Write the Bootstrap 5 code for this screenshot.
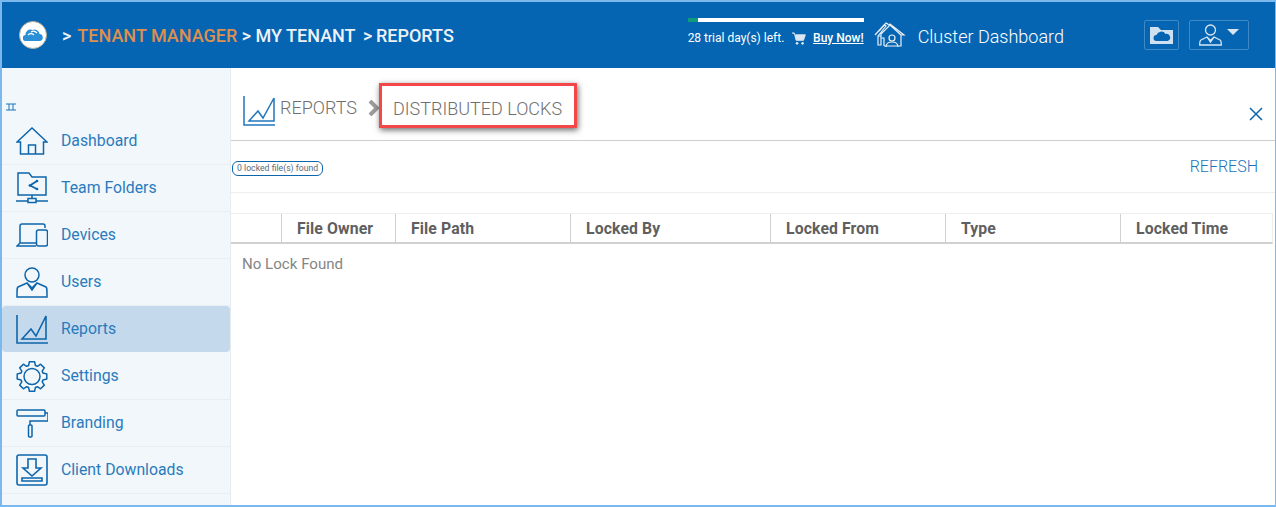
<!DOCTYPE html>
<html lang="en">
<head>
<meta charset="utf-8">
<title>Distributed Locks</title>
<link href="https://cdn.jsdelivr.net/npm/bootstrap@5.3.0/dist/css/bootstrap.min.css" rel="stylesheet">
<style>
html,body{height:507px;overflow:hidden;}
body{font-family:Roboto,"Liberation Sans",sans-serif;background:#fff;}
.frame{width:1276px;height:507px;border-style:solid;border-width:2px 1px 2px 2px;border-color:#7ab8ee;}
.topbar{height:66px;background:#0665b3;color:#fff;padding-left:17px;}
.logo-disc{width:28px;height:28px;border-radius:50%;background:#fff;border:1px solid #b9b29a;}
.crumbs{font-size:18px;font-weight:500;margin-left:15px;white-space:nowrap;color:#edf2f7;}
.crumbs .mgr{color:#dd8f4e;margin-left:6px;}
.crumbs .last{margin-left:-1px;}
.crumbs .third{margin-left:-1px;}
.trial{width:176px;margin-right:10px;margin-bottom:5px;}
.bar-track{height:4px;background:#fff;width:100%;}
.bar-fill{height:4px;background:#0f9b7d;width:6%;}
.trial-line{font-size:12px;white-space:nowrap;margin-top:7px;}
.trial-line a{color:#fff;font-weight:500;margin-left:-1px;}
.cluster{font-size:18px;font-weight:300;margin:3px 80px 0 12px;white-space:nowrap;}
.hdr-btn{height:30px;border:1px solid #3d8ac7;border-radius:2px;}
.b-folder{width:35px;}
.b-user{width:60px;margin-left:10px;margin-right:26px;}
.caret-w{width:0;height:0;border-left:6px solid transparent;border-right:6px solid transparent;border-top:6px solid #d8e6f3;margin-left:5px;margin-top:-7px;}
.side{width:229px;background:#f2f7fb;border-right:1px solid #e6ebef;padding-top:35px;flex:none;height:437px;}
.collapse-ico{display:block;margin:0 0 7px 4px;}
.side-item{height:47px;border-bottom:1px solid #e9eef2;padding-left:14px;color:#2a7bbd;font-size:15.8px;text-decoration:none;white-space:nowrap;}
.side-item svg{margin-right:13px;flex:none;}
.side-item.on{background:#c5d9ed;border-radius:4px;border-bottom:0;height:46px;margin-bottom:1px;}
.main{flex:1;min-width:0;}
.title-row{height:73px;border-bottom:1px solid #cfcfcf;padding:7px 0 0 12px;color:#6f6f6f;font-size:18px;font-weight:300;}
.title-ico{margin-top:6px;}
.crumb-a{margin-left:5px;}
.title-box{border:3px solid #f4474a;box-shadow:1px 2px 6px rgba(0,0,0,.6);height:45px;width:198px;margin:-5px 0 0 -1px;padding:6px 0 0 11px;white-space:nowrap;}
.sep{margin-left:11px;}
.close-x{margin-left:auto;margin-right:12px;margin-top:12px;}
.tool-row{height:52px;border-bottom:1px solid #eee;padding-right:17px;}
.pill-count{font-size:8.7px;line-height:13px;border:1px solid #0d65ac;border-radius:6px;padding:0 4px;color:#5d6a76;margin-left:1px;margin-top:3px;white-space:nowrap;}
.refresh{font-size:16px;font-weight:300;color:#1b74bb;text-decoration:none;margin-top:1px;}
.grid-head{margin-top:20px;height:31px;width:1042px;border-top:1px solid #eee;border-bottom:2px solid #d0d0d0;border-right:1px solid #eee;font-size:15.8px;font-weight:700;color:#5f5f5f;letter-spacing:.1px;}
.grid-head>div{height:100%;border-left:1px solid #d0d0d0;padding:2px 0 0 15px;display:flex;align-items:center;white-space:nowrap;}
.grid-head>div:first-child{border-left:0;}
.cw-1{width:50px;}.cw-2{width:114px;}.cw-3{width:175px;}.cw-4{width:200px;}.cw-5{flex:1;}
.empty{font-size:15.1px;color:#858585;padding:9px 0 0 11px;font-weight:400;}
</style>
</head>
<body class="m-0">
<div class="frame">
<header class="topbar d-flex align-items-center">
<span class="logo-disc d-flex align-items-center justify-content-center">
<svg width="20" height="14" viewBox="0 0 20 14"><path d="M3 13a3 3 0 0 1-.5-6 5 5 0 0 1 7-5 5 5 0 0 1 7 4 3.500 3.500 0 0 1-.5 7z" fill="#2a8fd6"/><path d="M5 7q3-3 6 0M8 4q3-2 6 1" stroke="#fff" stroke-width="1.200" fill="none"/></svg>
</span>
<div class="crumbs">&gt;<span class="mgr">TENANT MANAGER</span> &gt; MY TENANT &nbsp;<span class="third">&gt;</span> <span class="last">REPORTS</span></div>
<div class="ms-auto d-flex align-items-center">
<div class="trial">
<div class="bar-track"><div class="bar-fill"></div></div>
<div class="trial-line d-flex align-items-center">28 trial day(s) left.
<svg class="mx-2" width="15" height="15" viewBox="0 0 15 15"><path d="M0 1.500h2.500l2 8h8l2-6H4" fill="#dbe8f3" stroke="#dbe8f3"/><circle cx="5.500" cy="12.800" r="1.400" fill="#dbe8f3"/><circle cx="11.500" cy="12.800" r="1.400" fill="#dbe8f3"/></svg>
<a href="#">Buy Now!</a></div>
</div>
<svg width="32" height="26" viewBox="0 0 32 26" fill="none" stroke="#e8f0f7" stroke-width="1.200"><path d="M1 13 10 3l2 1-8 10M5 9l7-8 2 1M12 1l3 2 1-1 14 11h-3v11H10M27 13 16 3 7 12v2M4 14v9h3v-9zM7 16h3v8"/><circle cx="18" cy="16" r="3"/><path d="M12 25c0-4 3-5 6-5s6 1 6 5"/></svg>
<div class="cluster">Cluster Dashboard</div>
<div class="hdr-btn b-folder d-flex align-items-center justify-content-center">
<svg width="23" height="17" viewBox="0 0 23 17"><path d="M0 0h8l3 3h12v14H0z" fill="#cfe0f0"/><path d="M6.500 14a3 3 0 0 1 0-6 5 5 0 0 1 9-1 3.500 3.500 0 0 1 2 7z" fill="#0665b3"/></svg>
</div>
<div class="hdr-btn b-user d-flex align-items-center justify-content-center">
<svg width="23" height="22" viewBox="0 0 23 22" fill="none" stroke="#d8e6f3" stroke-width="1.300"><circle cx="11.500" cy="6" r="5"/><path d="M8 13 2 16c-1 .6-1.300 1.500-1.300 5h21.600c0-3.500-.3-4.400-1.300-5l-6-3-3.500 3.500zM8 13l3.500 5 3.500-5"/></svg>
<span class="caret-w"></span>
</div>
</div>
</header>
<div class="d-flex">
<nav class="side">
<svg class="collapse-ico" width="10" height="8" viewBox="0 0 10 8" fill="none" stroke="#1b74bb" stroke-width="1"><path d="M0 1h10M0 7h10M3 1v6M7 1v6"/></svg>
<a class="side-item d-flex align-items-center" href="#">
<svg width="32" height="28" viewBox="0 0 32 28" fill="none" stroke="#0d65ac" stroke-width="1.500"><path d="M1 15 16 1l15 14h-3.500v12h-23V15zM12.500 27V18h7v9"/></svg>Dashboard</a>
<a class="side-item d-flex align-items-center" href="#">
<svg width="32" height="32" viewBox="0 0 32 32" fill="none" stroke="#0d65ac" stroke-width="1.500"><path d="M2 23V1h11l3 4h14v18zM0 29h12M20 29h12M12 26.500h8v4h-8zM16 23v3.500"/><path d="M21 9l-7 4.500 7 3.500" stroke-width="1.800"/><circle cx="21" cy="9" r="1.300" fill="#0d65ac" stroke="none"/><circle cx="14" cy="13.500" r="1.300" fill="#0d65ac" stroke="none"/><circle cx="21" cy="17" r="1.300" fill="#0d65ac" stroke="none"/></svg>Team Folders</a>
<a class="side-item d-flex align-items-center" href="#">
<svg width="32" height="24" viewBox="0 0 32 24" fill="none" stroke="#0d65ac" stroke-width="1.500"><path d="M29 5V3a2 2 0 0 0-2-2H6a2 2 0 0 0-2 2v17L1 23h19M4 20h16"/><rect x="20.500" y="7" width="11" height="16" rx="2"/></svg>Devices</a>
<a class="side-item d-flex align-items-center" href="#">
<svg width="32" height="31" viewBox="0 0 32 31" fill="none" stroke="#0d65ac" stroke-width="1.500"><circle cx="16" cy="8" r="7"/><path d="M11 16 2 20c-1 .6-1 1.500-1 10h30c0-8.500 0-9.400-1-10l-9-4-5 5zM11 16l5 7 5-7"/></svg>Users</a>
<a class="side-item on d-flex align-items-center" href="#">
<svg width="32" height="31" viewBox="0 0 32 31" fill="none" stroke="#0d65ac" stroke-width="1.600"><path d="M1 1v28h31"/><path d="M6 25l9-10 5 7L30 2v23H6z"/></svg>Reports</a>
<a class="side-item d-flex align-items-center" href="#">
<svg width="32" height="31" viewBox="-16 -15.500 32 31" fill="none" stroke="#0d65ac" stroke-width="1.500" stroke-linejoin="round"><circle r="8"/><polygon points="-3.400,-11 -2.600,-14.800 2.600,-14.800 3.400,-11 5.400,-10.200 8.600,-12.300 12.300,-8.600 10.200,-5.400 11,-3.400 14.800,-2.600 14.800,2.600 11,3.400 10.200,5.400 12.300,8.600 8.600,12.300 5.400,10.200 3.400,11 2.600,14.800 -2.600,14.800 -3.400,11 -5.400,10.200 -8.600,12.300 -12.300,8.600 -10.200,5.400 -11,3.400 -14.800,2.600 -14.800,-2.600 -11,-3.400 -10.200,-5.400 -12.300,-8.600 -8.600,-12.300 -5.400,-10.200"/></svg>Settings</a>
<a class="side-item d-flex align-items-center" href="#">
<svg width="32" height="29" viewBox="0 0 32 29" fill="none" stroke="#0d65ac" stroke-width="1.500"><rect x="1" y="1" width="28" height="6" rx="1"/><path d="M29 4h3v8H14v4"/><rect x="12.500" y="16" width="3.500" height="12" rx="1"/></svg>Branding</a>
<a class="side-item d-flex align-items-center" href="#">
<svg width="32" height="32" viewBox="0 0 32 32" fill="none" stroke="#0d65ac" stroke-width="1.600"><rect x="1" y="1" width="30" height="30" rx="2"/><path d="M12 5h8v9h5l-9 8-9-8h5zM6 24h20v3H6z"/></svg>Client Downloads</a>
</nav>
<main class="main">
<div class="title-row d-flex align-items-center">
<svg class="title-ico" width="32" height="32" viewBox="0 0 32 32" fill="none" stroke="#2277bd" stroke-width="1.500"><path d="M1 1v29h31"/><path d="M6 26l9-10 5 7L31 3v23H6z"/></svg>
<span class="crumb-a">REPORTS</span>
<svg class="sep" width="12" height="16" viewBox="0 0 12 16" fill="none" stroke="#9b9b9b" stroke-width="4"><path d="M2 1l7 7-7 7"/></svg>
<div class="title-box d-flex align-items-center">DISTRIBUTED LOCKS</div>
<svg class="close-x" width="14" height="14" viewBox="0 0 14 14" stroke="#0d65ac" stroke-width="1.500"><path d="M1 1l12 12M13 1 1 13"/></svg>
</div>
<div class="tool-row d-flex align-items-center justify-content-between">
<span class="pill-count">0 locked file(s) found</span>
<a class="refresh" href="#">REFRESH</a>
</div>
<div class="grid-head d-flex">
<div class="cw-1"></div>
<div class="cw-2">File Owner</div>
<div class="cw-3">File Path</div>
<div class="cw-4">Locked By</div>
<div class="cw-3">Locked From</div>
<div class="cw-3">Type</div>
<div class="cw-5">Locked Time</div>
</div>
<div class="empty">No Lock Found</div>
</main>
</div>
</div>
<script src="https://cdn.jsdelivr.net/npm/bootstrap@5.3.0/dist/js/bootstrap.bundle.min.js"></script>
</body>
</html>
